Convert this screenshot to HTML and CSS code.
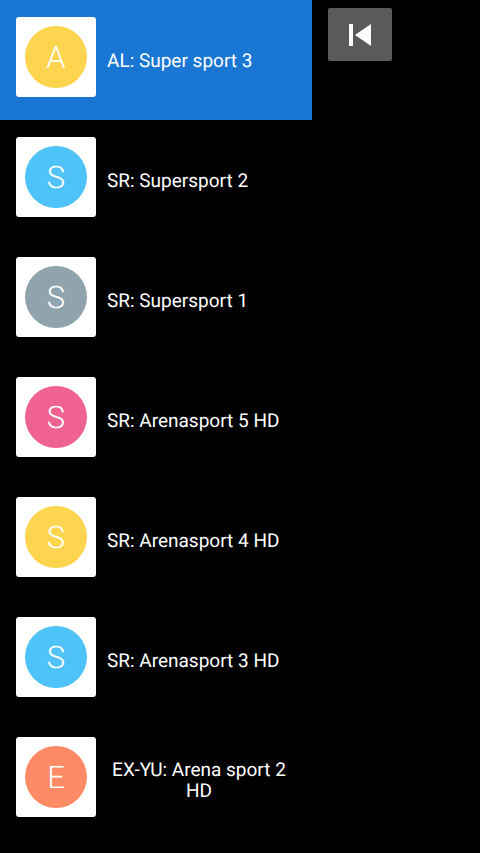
FILE: index.html
```html
<!DOCTYPE html>
<html lang="en">
<head>
<meta charset="utf-8">
<meta name="viewport" content="width=device-width, initial-scale=1">
<title>Channels</title>
<link rel="stylesheet" href="styles.css">
</head>
<body>
<main class="player">
  <ul class="channels">
    <li><button class="channel selected" type="button"><span class="thumb"><span class="avatar yellow">A</span></span><span class="name">AL: Super sport 3</span></button></li>
    <li><button class="channel" type="button"><span class="thumb"><span class="avatar blue">S</span></span><span class="name">SR: Supersport 2</span></button></li>
    <li><button class="channel" type="button"><span class="thumb"><span class="avatar grey">S</span></span><span class="name">SR: Supersport 1</span></button></li>
    <li><button class="channel" type="button"><span class="thumb"><span class="avatar pink">S</span></span><span class="name">SR: Arenasport 5 HD</span></button></li>
    <li><button class="channel" type="button"><span class="thumb"><span class="avatar yellow">S</span></span><span class="name">SR: Arenasport 4 HD</span></button></li>
    <li><button class="channel" type="button"><span class="thumb"><span class="avatar blue">S</span></span><span class="name">SR: Arenasport 3 HD</span></button></li>
    <li><button class="channel" type="button"><span class="thumb"><span class="avatar orange">E</span></span><span class="name">EX-YU: Arena sport 2 HD</span></button></li>
  </ul>
  <div class="controls">
    <button class="previous" type="button" aria-label="Previous">
      <svg width="22" height="22" viewBox="0 0 22 22" aria-hidden="true"><path fill="#fff" d="M0 0h4v22H0zM22 0v22L6 11z"/></svg>
    </button>
  </div>
</main>
</body>
</html>
```

FILE: styles.css
```css
* {
  box-sizing: border-box;
}

body {
  margin: 0;
  background: #000;
  color: #fff;
  font-family: Roboto, "Liberation Sans", sans-serif;
  text-rendering: geometricPrecision;
}

button {
  border: 0;
  font: inherit;
  color: inherit;
  text-rendering: inherit;
  cursor: pointer;
}

.player {
  display: flex;
  min-height: 100vh;
}

.channels {
  flex: 0 0 65%;
  margin: 0;
  padding: 0;
  list-style: none;
}

.channel {
  display: flex;
  align-items: center;
  gap: 11px;
  width: 100%;
  min-height: 120px;
  padding: 0 21px 0 16px;
  background: transparent;
}

.channel.selected {
  background: #1976d2;
}

.thumb {
  display: flex;
  flex: none;
  align-items: center;
  justify-content: center;
  width: 80px;
  height: 80px;
  margin-bottom: 6px;
  border-radius: 3px;
  background: #fff;
}

.avatar {
  width: 62px;
  height: 62px;
  border-radius: 50%;
  font-size: 31px;
  font-weight: 300;
  line-height: 64px;
  text-align: center;
}

.yellow {
  background: #ffd54f;
}

.blue {
  background: #4fc3f7;
}

.grey {
  background: #90a4ae;
}

.pink {
  background: #f06292;
}

.orange {
  background: #ff8a65;
}

.name {
  font-size: 19px;
  line-height: 21px;
  text-align: center;
}

.controls {
  flex: 1;
  padding: 8px 16px;
}

.previous {
  display: flex;
  align-items: center;
  justify-content: center;
  width: 64px;
  height: 53px;
  padding: 0;
  border-radius: 2px;
  background: #5a5a5a;
}
```
